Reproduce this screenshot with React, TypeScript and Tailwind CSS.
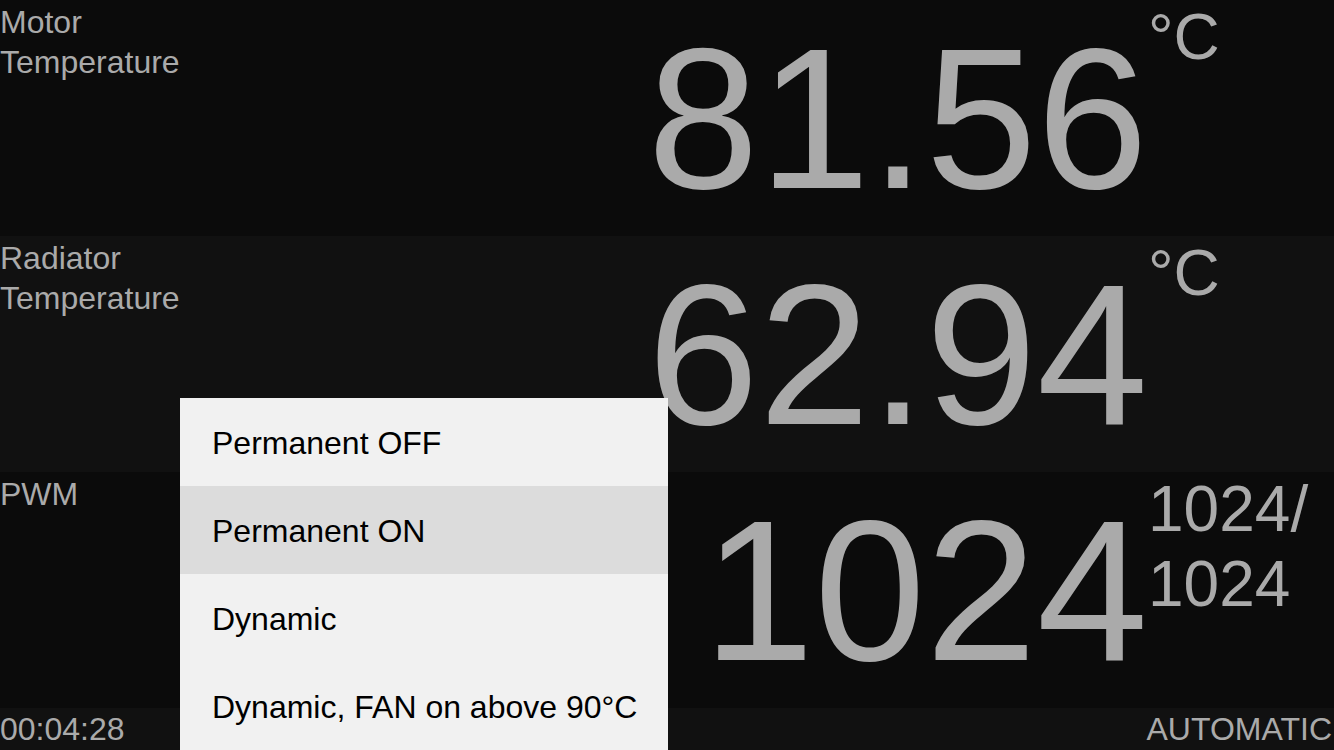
const font = { fontFamily: '"Liberation Sans", Arial, Helvetica, sans-serif' };

interface ReadingRowProps {
  label: string[];
  value: string;
  unit: string[];
  bg: string;
}

function ReadingRow({ label, value, unit, bg }: ReadingRowProps) {
  return (
    <div className={`flex h-[236px] w-full ${bg}`}>
      <div className="w-[300px] pt-[2px] text-[32px] leading-[40px] text-[#aaaaaa]">
        {label.map((l) => (
          <div key={l}>{l}</div>
        ))}
      </div>
      <div className="flex-1 text-right text-[200px] leading-none pt-[19px] text-[#aaaaaa]">
        {value}
      </div>
      <div className="w-[186px] text-[64px] leading-[75px] text-[#aaaaaa]">
        {unit.map((u) => (
          <div key={u}>{u}</div>
        ))}
      </div>
    </div>
  );
}

const options = [
  "Permanent OFF",
  "Permanent ON",
  "Dynamic",
  "Dynamic, FAN on above 90°C",
];

export default function App() {
  const selected = 1;

  return (
    <div className="relative h-[750px] w-full overflow-hidden bg-[#0b0b0b]" style={font}>
      <ReadingRow label={["Motor", "Temperature"]} value="81.56" unit={["°C"]} bg="bg-[#0b0b0b]" />
      <ReadingRow label={["Radiator", "Temperature"]} value="62.94" unit={["°C"]} bg="bg-[#111111]" />
      <ReadingRow label={["PWM"]} value="1024" unit={["1024/", "1024"]} bg="bg-[#0b0b0b]" />

      <div className="flex h-[42px] items-center justify-between bg-[#111111] text-[32px] leading-[42px] text-[#aaaaaa]">
        <span>00:04:28</span>
        <span className="pr-[2px]">AUTOMATIC</span>
      </div>

      {/* mode menu */}
      <div className="absolute left-[180px] top-[398px] w-[488px] bg-[#f1f1f1]">
        {options.map((opt, i) => (
          <div
            key={opt}
            className={`flex h-[88px] items-center whitespace-nowrap pl-[32px] pt-[2px] text-[32px] text-black ${
              i === selected ? "bg-[#dcdcdc]" : ""
            }`}
          >
            {opt}
          </div>
        ))}
      </div>
    </div>
  );
}
